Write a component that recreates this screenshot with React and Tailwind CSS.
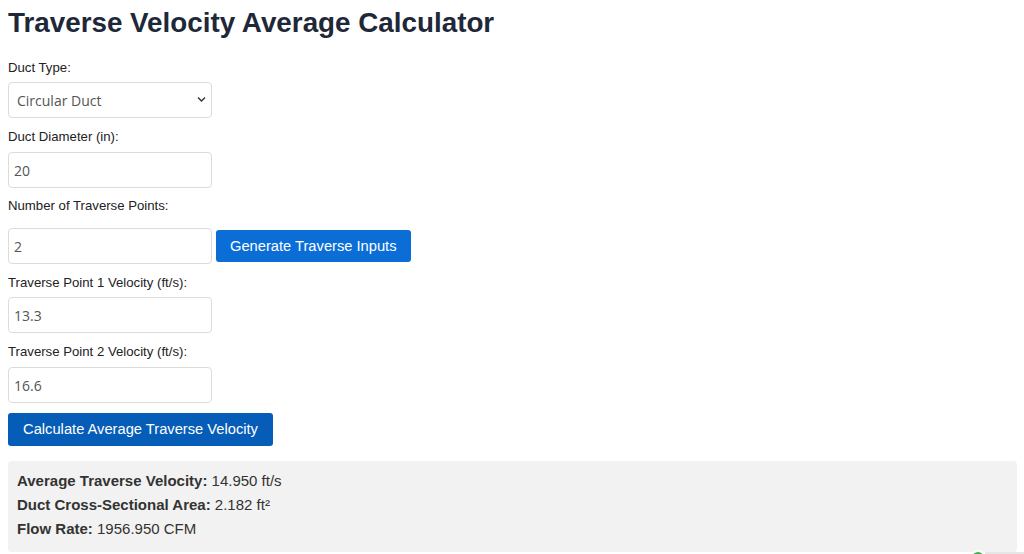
import React from "react";

const inputCls =
  "block w-[204px] h-[36px] border border-[#dcdcdc] rounded-[4px] bg-white text-[14px] text-[#555] outline-none";
const inputFont = { fontFamily: '"Open Sans", "Noto Sans", sans-serif' };

function Label({ children, className = "" }) {
  return (
    <div
      className={"text-[13.2px] leading-[18px] text-[#222] " + className}
      style={{ fontFamily: '"Liberation Sans", Arial, sans-serif' }}
    >
      {children}
    </div>
  );
}

export default function App() {
  return (
    <div
      className="relative w-[1024px] h-[554px] overflow-hidden bg-white pl-[8px] pr-[7px]"
      style={{ fontFamily: '"Liberation Sans", Arial, sans-serif' }}
    >
      <h1 className="pt-[5px] h-[40px] leading-[35px] text-[27.8px] font-bold text-[#1e2838]">
        Traverse Velocity Average Calculator
      </h1>

      <Label className="mt-[19px]">Duct Type:</Label>
      <div className="relative mt-[5px] w-[204px]">
        <select
          className={inputCls + " appearance-none pl-[8px]"}
          style={inputFont}
          defaultValue="circular"
        >
          <option value="circular">Circular Duct</option>
          <option value="rect">Rectangular Duct</option>
        </select>
        <svg
          className="absolute right-[6px] top-[14px]"
          width="9"
          height="7"
          viewBox="0 0 9 7"
          fill="none"
        >
          <path d="M1 1.5 L4.5 5 L8 1.5" stroke="#333" strokeWidth="1.4" />
        </svg>
      </div>

      <Label className="mt-[10px]">Duct Diameter (in):</Label>
      <input
        className={inputCls + " mt-[6px] px-[5px]"}
        style={inputFont}
        defaultValue="20"
      />

      <Label className="mt-[9px]">Number of Traverse Points:</Label>
      <div className="mt-[13px] flex items-center gap-[4px]">
        <input className={inputCls + " px-[5px]"} style={inputFont} defaultValue="2" />
        <button className="h-[32px] px-[14px] rounded-[3px] bg-[#0a6ed6] text-white text-[14.7px]">
          Generate Traverse Inputs
        </button>
      </div>

      <Label className="mt-[10px]">Traverse Point 1 Velocity (ft/s):</Label>
      <input
        className={inputCls + " mt-[5px] px-[5px]"}
        style={inputFont}
        defaultValue="13.3"
      />

      <Label className="mt-[10px]">Traverse Point 2 Velocity (ft/s):</Label>
      <input
        className={inputCls + " mt-[6px] px-[5px]"}
        style={inputFont}
        defaultValue="16.6"
      />

      <button className="mt-[10px] block h-[33px] w-[265px] rounded-[3px] bg-[#055db8] text-white text-[14.7px]">
        Calculate Average Traverse Velocity
      </button>

      <div className="mt-[15px] h-[91px] rounded-[4px] bg-[#f2f2f2] pl-[9px] pt-[8px] text-[15px] leading-[24px] text-[#333]">
        <div>
          <span className="font-bold">Average Traverse Velocity:</span> 14.950 ft/s
        </div>
        <div>
          <span className="font-bold">Duct Cross-Sectional Area:</span> 2.182 ft²
        </div>
        <div>
          <span className="font-bold">Flow Rate:</span> 1956.950 CFM
        </div>
      </div>

      <div className="absolute left-[985px] top-[552px] w-[39px] h-[2px] bg-[#e6e6e6]" />
      <div className="absolute left-[970px] top-[550px] w-[16px] h-[16px] rounded-full bg-[#3cb44a] border-2 border-white" />
    </div>
  );
}
